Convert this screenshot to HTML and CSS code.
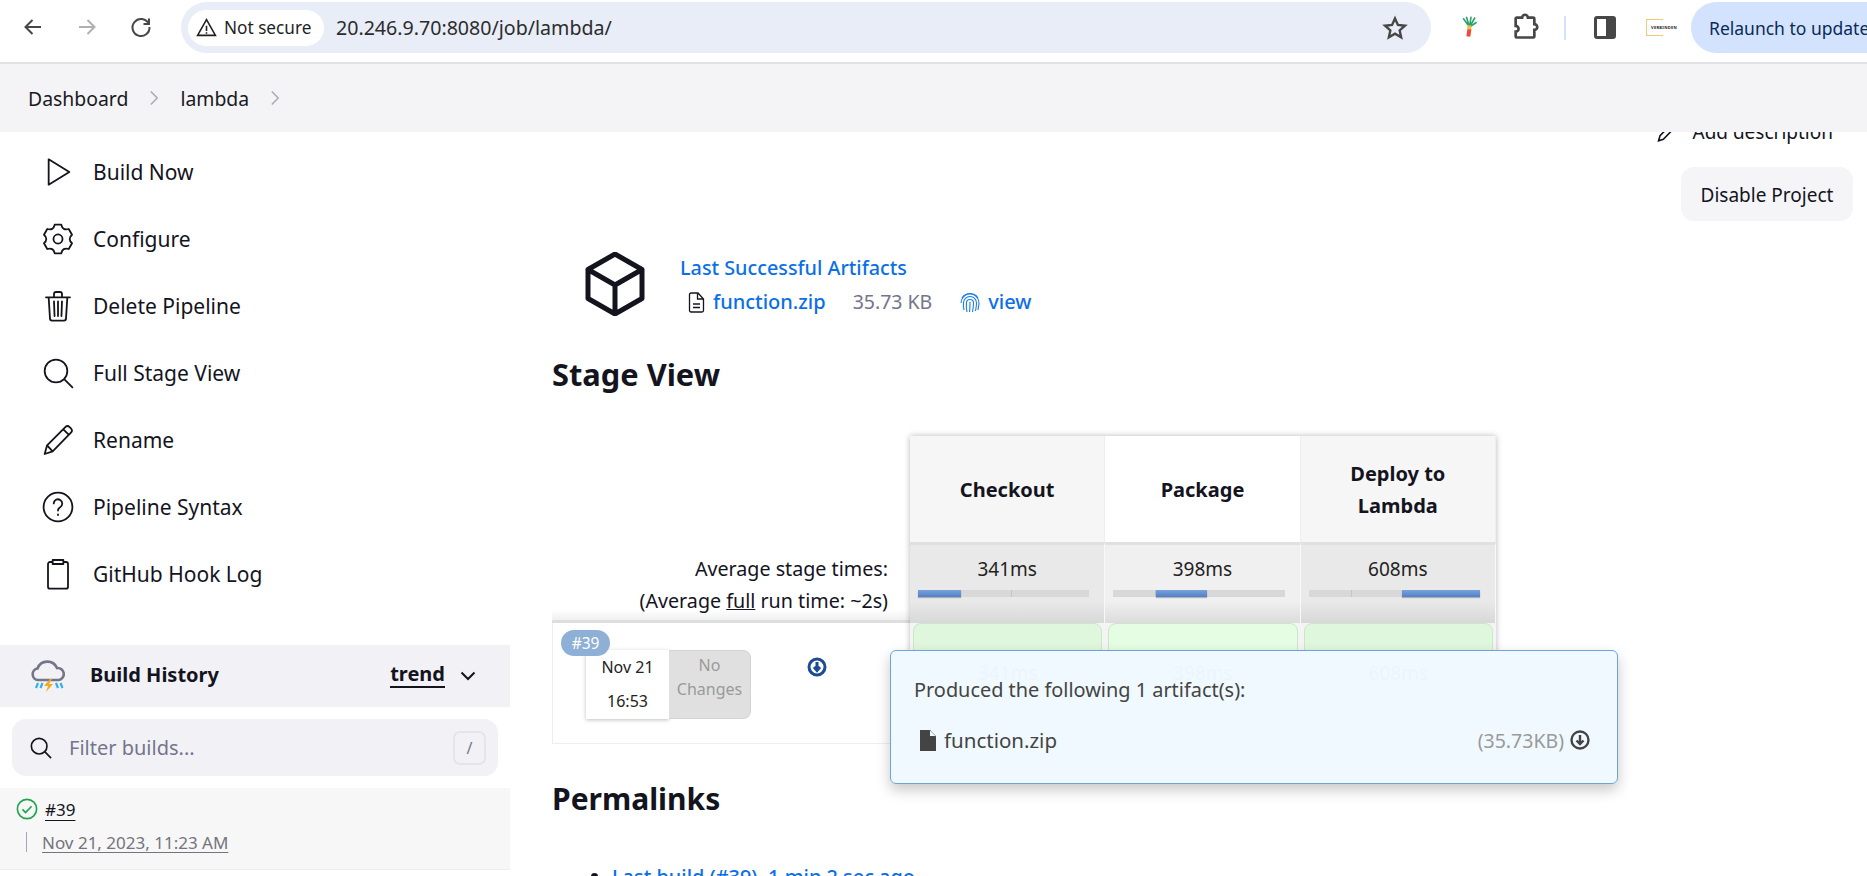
FILE: index.html
```html
<!DOCTYPE html>
<html lang="en">
<head>
<meta charset="utf-8">
<title>lambda - Jenkins</title>
<link rel="stylesheet" href="styles.css">
</head>
<body>
<header class="chrome">
  <svg class="nav" viewBox="0 0 24 24"><path d="M20 12H5M11.5 5L4.500 12l7 7" /></svg>
  <svg class="nav off" viewBox="0 0 24 24"><path d="M4 12h15M12.500 5l7 7-7 7" /></svg>
  <svg class="nav" viewBox="0 0 24 24"><path d="M19.500 8.500A8.500 8.500 0 1 0 20.500 12M20 3.500v5.500h-5.500" /></svg>
  <div class="omni">
    <div class="chip">
      <svg class="warn" viewBox="0 0 24 24"><path d="M12 3L1.800 21h20.400zM12 10v6M12 17.500v1.500" /></svg>
      <span>Not secure</span>
    </div>
    <span class="url">20.246.9.70:8080/job/lambda/</span>
    <svg class="star" viewBox="0 0 24 24"><path d="M12 3.200l2.700 6 6.500.7-4.900 4.300 1.400 6.400L12 17.300l-5.700 3.300 1.400-6.400-4.900-4.300 6.500-.7z" /></svg>
  </div>
  <svg class="leek" viewBox="0 0 24 28">
    <path d="M12 14L4 3M12 14L8 1M12 14l2-13M12 14L19 2M12 14l9-6" stroke="#2da36b" />
    <path d="M12 16l-1.500 10" stroke="#ef4a3c" stroke-width="5" />
    <path d="M12 12l-.5 5" stroke="#e9c23c" stroke-width="5" />
  </svg>
  <svg class="puzzle" viewBox="0 0 24 24"><path d="M5 4h4.500a2.500 2.500 0 0 1 5 0H19a1 1 0 0 1 1 1v4.500a2.500 2.500 0 0 1 0 5V20a1 1 0 0 1-1 1H5a1 1 0 0 1-1-1v-4a2.500 2.500 0 0 0 0-5V5a1 1 0 0 1 1-1z" /></svg>
  <span class="tooldiv"></span>
  <div class="panel"><span></span></div>
  <div class="verb"><span class="verb-box"></span><span class="verb-text">VERBINDEN</span></div>
  <div class="relaunch">Relaunch to update</div>
</header>

<nav class="crumbs">
  <span>Dashboard</span>
  <svg class="sep" viewBox="0 0 12 20"><path d="M2 2l8 8-8 8" /></svg>
  <span>lambda</span>
  <svg class="sep" viewBox="0 0 12 20"><path d="M2 2l8 8-8 8" /></svg>
</nav>

<div class="page">
  <aside class="side">
    <ul class="tasks">
      <li><svg class="ico" viewBox="0 0 24 24"><path d="M5 2.500v19L20.500 12z" /></svg>Build Now</li>
      <li><svg class="ico" viewBox="0 0 24 24"><path d="M9.530 1.280L14.470 1.280Q15.500 5.940 20.040 4.500L22.520 8.790Q19 12 22.520 15.210L20.040 19.500Q15.500 18.060 14.470 22.720L9.530 22.720Q8.500 18.060 3.960 19.500L1.480 15.210Q5 12 1.480 8.790L3.960 4.500Q8.500 5.940 9.530 1.280Z" /><circle cx="12" cy="12" r="3.400" /></svg>Configure</li>
      <li><svg class="ico" viewBox="0 0 24 24"><path d="M3 5.500h18M5 5.500l1 16a1.500 1.500 0 0 0 1.500 1.400h9A1.500 1.500 0 0 0 18 21.500l1-16M9 5.500V3a1.500 1.500 0 0 1 1.500-1.500h3A1.500 1.500 0 0 1 15 3v2.500M12 8.500v11M9 8.500l.4 11M15 8.500l-.4 11" /></svg>Delete Pipeline</li>
      <li><svg class="ico" viewBox="0 0 24 24"><circle cx="10.500" cy="10.500" r="8.500" /><path d="M16.800 16.800l6 6" /></svg>Full Stage View</li>
      <li><svg class="ico" viewBox="0 0 24 24"><path d="M2 22.500l1.800-6.500L17.500 2.300a2.300 2.300 0 0 1 3.200 0l1 1a2.300 2.300 0 0 1 0 3.200L8 20.500zM3.800 16l4.200 4.500M16 4l4 4" /></svg>Rename</li>
      <li><svg class="ico" viewBox="0 0 24 24"><circle cx="12" cy="12" r="10.800" /><path d="M8.800 9.300a3.200 3.200 0 1 1 4.800 2.900c-1 .6-1.600 1.200-1.600 2.500M12 17.500v.5" /></svg>Pipeline Syntax</li>
      <li><svg class="ico" viewBox="0 0 24 24"><path d="M8 3H6a1.500 1.500 0 0 0-1.500 1.500v17A1.500 1.500 0 0 0 6 23h12a1.500 1.500 0 0 0 1.500-1.500v-17A1.500 1.500 0 0 0 18 3h-2M8 1.500h8V4.500H8z" /></svg>GitHub Hook Log</li>
    </ul>

    <section class="history">
      <div class="hist-head">
        <svg class="cloud" viewBox="0 0 34 34">
          <path d="M7 21a5.800 5.800 0 0 1-.5-11.500A10.500 10.500 0 0 1 26 9a6 6 0 0 1 1.500 12z" fill="none" stroke="#75758a" stroke-width="2.600" />
          <path d="M19 20l-6 7h4l-2 6 7-8h-4l3-5z" fill="#f6a821" />
          <path d="M7 24l-2 5M11.500 24l-2 5M25 24l2 5M29.500 24l2 5" stroke="#34aef0" stroke-width="2.200" fill="none" />
        </svg>
        <strong class="hist-title">Build History</strong>
        <span class="trend">trend</span>
        <svg class="chev" viewBox="0 0 16 10"><path d="M1.500 1.500L8 8l6.500-6.500" /></svg>
      </div>
      <div class="filter">
        <svg class="filter-ico" viewBox="0 0 24 24"><circle cx="10" cy="10" r="8.500" /><path d="M16 16l7 7" /></svg>
        <span class="filter-text">Filter builds...</span>
        <kbd class="key">/</kbd>
      </div>
      <div class="build">
        <div class="build-top">
          <svg class="ok" viewBox="0 0 24 24"><circle cx="12" cy="12" r="10.500" /><path d="M7 12.500l3.500 3.500 6.500-7" /></svg>
          <a class="build-num">#39</a>
        </div>
        <div class="build-date"><a>Nov 21, 2023, 11:23 AM</a></div>
      </div>
    </section>
  </aside>

  <main class="main">
    <div class="actions">
      <div class="add-desc">
        <svg class="add-ico" viewBox="0 0 24 24"><path d="M2 22.500l1.800-6.500L17.500 2.300a2.300 2.300 0 0 1 3.200 0l1 1a2.300 2.300 0 0 1 0 3.200L8 20.500z" /></svg>
        Add description
      </div>
      <button class="disable">Disable Project</button>
    </div>

    <div class="artifacts">
      <svg class="cube" viewBox="0 0 60 64"><path d="M30 2l27 15.500v29L30 62 3 46.500v-29zM3 17.500L30 33l27-15.500M30 33v29" /></svg>
      <div class="art-body">
        <a class="art-title">Last Successful Artifacts</a>
        <div class="art-row">
          <svg class="doc" viewBox="0 0 16 21"><path d="M2.500 1h7L15 7v11.500a1.500 1.500 0 0 1-1.500 1.500h-11A1.500 1.500 0 0 1 1 18.500v-16A1.500 1.500 0 0 1 2.500 1zM9 1v6h6M4.500 12h7M4.500 15.500h7" /></svg>
          <a class="art-link">function.zip</a>
          <span class="art-size">35.73 KB</span>
          <svg class="finger" viewBox="0 0 20 22"><path d="M2 7a9.500 9.500 0 0 1 16 0M1 12a9 9 0 0 1 18 0c0 3-1 5-1 7M4 19c-.5-2-1-4-.5-7a6.500 6.500 0 0 1 13 0c0 3-.5 5-1 8M7 21c-.5-3-1-6-.5-9a3.500 3.500 0 0 1 7 0c0 3-.5 6-1 9M10 11c0 4 0 7-.5 10" /></svg>
          <a class="art-link">view</a>
        </div>
      </div>
    </div>

    <h2 class="h-stage">Stage View</h2>

    <div class="stage">
      <div class="stage-left">
        <div class="left-head"></div>
        <div class="left-avg">
          <div>Average stage times:</div>
          <div>(Average <u>full</u> run time: ~2s)</div>
        </div>
        <div class="run">
          <span class="badge">#39</span>
          <div class="run-date"><span>Nov 21</span><span>16:53</span></div>
          <div class="run-changes">No<br>Changes</div>
          <svg class="run-dl" viewBox="0 0 20 20"><circle cx="10" cy="10" r="8" /><path d="M10 5v8M7 10l3 3.500 3-3.500" /></svg>
        </div>
      </div>
      <div class="stage-grid">
        <div class="th">Checkout</div>
        <div class="th alt">Package</div>
        <div class="th">Deploy to<br>Lambda</div>
        <div class="avg">341ms<div class="bar"><i class="b1"></i></div></div>
        <div class="avg alt">398ms<div class="bar"><i class="b2"></i></div></div>
        <div class="avg">608ms<div class="bar"><i class="b3"></i></div></div>
        <div class="cellwrap"><div class="cell">341ms</div></div>
        <div class="cellwrap"><div class="cell pale">398ms</div></div>
        <div class="cellwrap"><div class="cell">608ms</div></div>
      </div>
      <div class="popup">
        <div class="pop-title">Produced the following 1 artifact(s):</div>
        <div class="pop-row">
          <svg class="pop-file" viewBox="0 0 16 21"><path d="M0 0h9.500L16 6.500V21H0zM10 0v6h6" fill-rule="evenodd" /></svg>
          <span class="pop-name">function.zip</span>
          <span class="pop-size">(35.73KB)</span>
          <svg class="pop-dl" viewBox="0 0 20 20"><circle cx="10" cy="10" r="8.500" /><path d="M10 5v9M6.500 10.500L10 14l3.500-3.500" /></svg>
        </div>
      </div>
    </div>

    <h2 class="h-perma">Permalinks</h2>
    <ul class="links">
      <li><a>Last build (#39), 1 min 2 sec ago</a></li>
    </ul>
  </main>
</div>
</body>
</html>
```
FILE: styles.css
```css
* { box-sizing: border-box; }
html, body { margin: 0; height: 876px; overflow: hidden; }
body { background: #fff; color: #14141f; font-family: "Noto Sans", "Open Sans", sans-serif; display: flex; flex-direction: column; }
svg { display: block; flex: none; fill: none; }
a { color: inherit; }

.chrome { height: 64px; flex: none; display: flex; align-items: flex-start; border-bottom: 2px solid #e2e2e4; background: #fff; padding: 2px 0 0 21px; white-space: nowrap; overflow: hidden; }
.chrome > * { flex: none; }
.nav { width: 24px; height: 24px; margin: 13px 30px 0 0; stroke: #474747; stroke-width: 2; }
.nav.off { stroke: #b0b0b0; }
.omni { width: 1250px; height: 51px; margin-left: -2px; border-radius: 26px; background: #e9edf7; display: flex; align-items: center; padding: 0 23px 0 7px; }
.chip { height: 36px; width: 136px; border-radius: 18px; background: #fff; display: flex; align-items: center; gap: 7px; padding-left: 8px; font-size: 17.200px; color: #1f1f1f; }
.warn { width: 21px; height: 21px; stroke: #1f1f1f; stroke-width: 1.800; }
.url { margin-left: 12px; font-size: 19.600px; color: #2c2c2e; flex: 1; }
.star { width: 26px; height: 26px; stroke: #474747; stroke-width: 2.200; }
.leek { width: 19px; height: 24px; margin: 13px 0 0 29px; stroke-width: 2; }
.puzzle { width: 28px; height: 28px; margin: 11px 0 0 32px; stroke: #474747; stroke-width: 2.300; }
.tooldiv { width: 2px; height: 24px; margin: 14px 0 0 25px; background: #d3e3fd; }
.panel { width: 22px; height: 23px; margin: 14px 0 0 28px; border: 3px solid #474747; border-radius: 3px; background: #474747; }
.panel span { display: block; width: 9px; height: 100%; background: #fff; }
.verb { display: flex; align-items: center; margin: 17px 0 0 30px; height: 17px; }
.verb-box { width: 17px; height: 17px; border: 1.500px solid #f8c77a; border-right: 0; }
.verb-text { font-size: 4px; font-weight: 700; letter-spacing: .3px; margin-left: -12px; width: 28px; color: #222; }
.relaunch { margin: 0 0 0 12px; height: 51px; width: 200px; border-radius: 26px 0 0 26px; background: #d3e3fd; color: #0a2a5c; font-size: 17.500px; display: flex; align-items: center; padding-left: 18px; }

.crumbs { height: 68px; flex: none; background: #f4f4f6; display: flex; align-items: center; padding-left: 28px; font-size: 19.400px; color: #1a1a24; position: relative; z-index: 2; }
.sep { width: 10px; height: 16px; margin: 0 21px; stroke: #a8a8b4; stroke-width: 1.800; }

.page { flex: 1; min-height: 0; display: flex; overflow: hidden; }

.side { width: 510px; flex: none; padding-top: 6px; }
.tasks { list-style: none; margin: 0; padding: 0; }
.tasks li { height: 67px; display: flex; align-items: center; padding-left: 42px; font-size: 21px; gap: 19px; }
.ico { width: 32px; height: 32px; stroke: #14141f; stroke-width: 1.350; stroke-linejoin: round; stroke-linecap: round; }

.history { margin-top: 38px; }
.hist-head { height: 62px; background: #f2f2f6; display: flex; align-items: center; padding: 0 0 3px 31px; }
.cloud { width: 34px; height: 34px; margin-top: 3px; }
.hist-title { margin-left: 25px; font-size: 20px; font-weight: 700; flex: 1; }
.trend { font-size: 20px; font-weight: 700; border-bottom: 2px solid #14141f; line-height: 24px; }
.chev { width: 16px; height: 10px; margin: 3px 34px 0 15px; stroke: #14141f; stroke-width: 2; }
.filter { margin: 12px 12px 0; height: 57px; border-radius: 14px; background: #f2f2f6; display: flex; align-items: center; padding: 0 12px 0 18px; }
.filter-ico { width: 22px; height: 22px; stroke: #14141f; stroke-width: 1.800; }
.filter-text { margin-left: 17px; flex: 1; font-size: 20px; color: #74748c; }
.key { width: 33px; height: 34px; border: 2px solid #e4e4ec; border-radius: 7px; display: flex; align-items: center; justify-content: center; font: 16px "Noto Sans", sans-serif; color: #74748c; }
.build { margin-top: 12px; height: 82px; background: #f7f7f8; border-bottom: 1px solid #efeff2; padding: 10px 0 0 16px; }
.build-top { display: flex; align-items: center; gap: 7px; height: 22px; }
.ok { width: 22px; height: 22px; stroke: #1ea64a; stroke-width: 1.800; }
.build-num { font-size: 17px; text-decoration: underline; text-underline-offset: 4px; }
.build-date { margin: 12px 0 0 10px; padding-left: 15px; height: 20px; border-left: 1px solid #a0a8b4; display: flex; align-items: center; font-size: 17px; color: #74747c; }
.build-date a { text-decoration: underline; text-underline-offset: 3px; }

.main { flex: 1; min-width: 0; padding-left: 42px; }
.actions { display: flex; flex-direction: column; align-items: flex-end; margin: -27px 14px 0 0; height: 116px; }
.add-desc { height: 54px; display: flex; align-items: center; gap: 16px; font-size: 19px; padding-right: 20px; }
.add-ico { width: 19px; height: 19px; stroke: #14141f; stroke-width: 2; }
.disable { height: 54px; width: 172px; margin-top: 8px; border: 0; border-radius: 13px; background: #f5f5f7; color: #14141f; font: 19px "Noto Sans", sans-serif; padding: 2px 0 0; }

.artifacts { display: flex; margin: 31px 0 0 33px; height: 64px; }
.cube { width: 60px; height: 64px; stroke: #14141f; stroke-width: 5; stroke-linejoin: round; stroke-linecap: round; }
.art-body { margin-left: 35px; padding-top: 2px; }
.art-title { display: block; height: 32px; line-height: 28px; font-size: 19.800px; color: #0b6fe8; font-weight: 500; }
.art-row { display: flex; align-items: center; height: 30px; padding-left: 8px; font-size: 20px; }
.doc { width: 17px; height: 21px; stroke: #14141f; stroke-width: 1.300; margin-top: 3px; }
.art-link { color: #0b6fe8; font-weight: 500; margin-left: 8px; }
.art-size { color: #74748c; margin: 0 28px 0 27px; font-size: 19.500px; }
.finger { width: 20px; height: 22px; stroke: #1a7de8; stroke-width: 1.100; margin: 2px 0 0 0; }

.h-stage, .h-perma { margin: 0; font-weight: 700; line-height: 40px; }
.h-stage { margin-top: 38px; font-size: 30.800px; }
.stage { position: relative; display: flex; margin-top: 42px; height: 308px; }
.stage-left { width: 358px; flex: none; }
.left-head { height: 106px; }
.left-avg { height: 81px; border-bottom: 3px solid #dedede; text-align: right; padding: 11px 22px 0 0; font-size: 19.700px; line-height: 32px; background: linear-gradient(#fff 86%, #f0f0f0); white-space: nowrap; }
.run { position: relative; height: 121px; border: 1px solid #eee; border-top: 0; border-right: 0; display: flex; align-items: flex-start; padding: 27px 0 0 33px; }
.badge { position: absolute; left: 8px; top: 7px; width: 49px; height: 26px; border-radius: 13px; background: #8eb0d6; color: #fff; font-size: 15.500px; display: flex; align-items: center; justify-content: center; z-index: 1; }
.run-date { width: 83px; height: 69px; background: #fff; box-shadow: 0 1px 4px rgba(0,0,0,.25); display: flex; flex-direction: column; align-items: center; font-size: 16px; color: #222; line-height: 34px; }
.run-changes { width: 82px; height: 69px; background: #e0e0e0; border: 1px solid #d4d4d4; border-left: 0; border-radius: 0 8px 8px 0; text-align: center; font-size: 16px; line-height: 24px; color: #9a9a9a; padding-top: 2px; }
.run-dl { width: 20px; height: 20px; margin: 7px 0 0 56px; stroke: #1c4c94; stroke-width: 3; }

.stage-grid { width: 586px; flex: none; height: 308px; display: grid; grid-template-columns: repeat(3, 1fr); grid-template-rows: 106px 81px 121px; box-shadow: 0 0 6px rgba(0,0,0,.28); }
.th { background: #f6f6f6; display: flex; align-items: center; justify-content: center; text-align: center; font-size: 20px; font-weight: 700; line-height: 32px; border-right: 1px solid #eee; padding-top: 2px; }
.th.alt { background: #fff; }
.avg { background: linear-gradient(#e9e9e9 72%, #d8d8d8); border-top: 3px solid #e0e0e0; border-right: 1px solid #f8f8f8; text-align: center; font-size: 19px; line-height: 26px; padding: 11px 8px 0; color: #222; }
.avg.alt { background: linear-gradient(#f0f0f0 72%, #dcdcdc); }
.bar { position: relative; height: 7px; margin: 8px 7px 0 0; background: linear-gradient(90deg, #d8d8d8 42px, #c4c4c4 42px, #c4c4c4 43px, #d8d8d8 43px, #d8d8d8 93px, #c4c4c4 93px, #c4c4c4 94px, #d8d8d8 94px); }
.bar i { position: absolute; top: 0; bottom: 0; background: linear-gradient(#7aa2dc, #4f80c8); box-shadow: 0 1px 1px rgba(0,0,0,.25); }
.b1 { left: 0; width: 43px; }
.b2 { left: 43px; width: 51px; }
.b3 { right: 0; width: 78px; }
.cellwrap { background: #f4f4f4; padding: 0 3px; }
.cell { height: 100%; background: #dff7dc; border: 1px solid #cbe7c8; border-radius: 8px; text-align: center; font-size: 19px; color: #222; padding-top: 36px; }
.cell.pale { background: #e5fde2; }

.popup { position: absolute; left: 338px; top: 214px; width: 728px; height: 134px; z-index: 3; background: rgba(240,249,255,.98); border: 1px solid #6ea4dc; border-radius: 6px; box-shadow: 0 6px 14px rgba(0,0,0,.22); padding: 26px 27px 0 23px; color: #444; font-size: 19.900px; }
.pop-title { line-height: 26px; }
.pop-row { display: flex; align-items: center; margin-top: 25px; height: 24px; }
.pop-file { width: 16px; height: 21px; fill: #444; margin-left: 6px; }
.pop-name { margin-left: 8px; flex: 1; font-size: 20.500px; }
.pop-size { color: #9a9a9a; font-size: 19.500px; }
.pop-dl { width: 20px; height: 20px; margin-left: 6px; stroke: #444; stroke-width: 2.400; }

.h-perma { margin-top: 35px; font-size: 30px; }
.links { margin: 45px 0 0; padding-left: 60px; font-size: 19.900px; line-height: 26px; }
.links a { color: #0b6fe8; font-weight: 500; }
```
